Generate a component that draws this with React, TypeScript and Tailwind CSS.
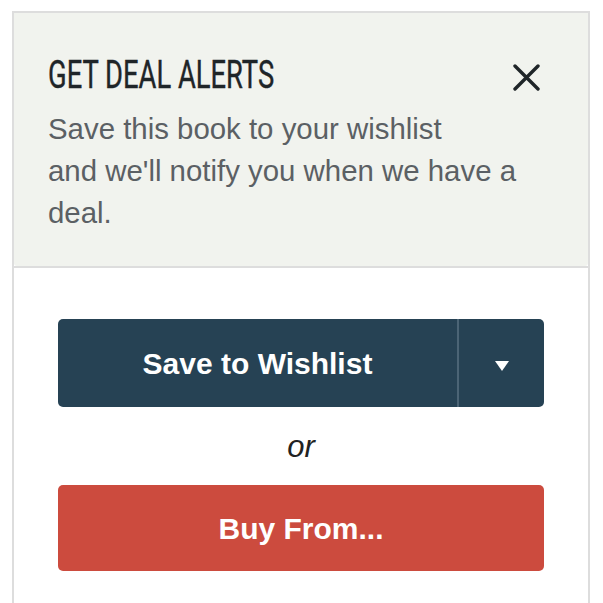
const CloseIcon = () => (
  <svg width="27" height="27" viewBox="0 0 27 27" fill="none" aria-hidden="true">
    <path d="M2 2 L25 25 M25 2 L2 25" stroke="#1f2528" strokeWidth="3.4" strokeLinecap="round" />
  </svg>
)

const Caret = () => (
  <svg width="14" height="10" viewBox="0 0 14 10" aria-hidden="true">
    <path d="M0 0 H14 L7 10 Z" fill="#ffffff" />
  </svg>
)

export default function App() {
  return (
    <div className="min-h-screen bg-white pt-[11px] pl-[12px] pr-[13px] font-['Liberation_Sans',Arial,sans-serif]">
      <div className="min-h-[600px] border-2 border-b-0 border-[#dddddd]">
        {/* deal alert header */}
        <div className="bg-[#f1f3ee] pt-[43px] pb-[32px] pl-[34px] pr-[48px] rounded-b-[3px]">
          <div className="flex items-start justify-between">
            <h2 className="h-[38px] text-[38px] leading-[38px] font-normal text-[#1f2528] font-['Roboto',sans-serif] whitespace-nowrap [-webkit-text-stroke:0.4px_#1f2528]">
              <span className="inline-block origin-left scale-x-[0.72]">GET DEAL ALERTS</span>
            </h2>
            <button type="button" className="mt-[8px]">
              <CloseIcon />
            </button>
          </div>
          <p className="mt-[14px] max-w-[496px] text-[29.4px] leading-[42px] text-[#5b6064]">
            Save this book to your wishlist
            <br />
            and we'll notify you when we have a deal.
          </p>
        </div>
        <div className="h-[2px] bg-[#dddddd]" />

        {/* actions */}
        <div className="px-[44px] pt-[51px]">
          <div className="flex h-[88px] overflow-hidden rounded-[5px] bg-[#264254]">
            <button type="button" className="flex flex-1 items-center justify-center text-[30px] font-bold text-white">
              Save to Wishlist
            </button>
            <div className="w-[2px] bg-[#4b6475]" />
            <button type="button" className="flex w-[85px] items-center justify-center pt-[6px]">
              <Caret />
            </button>
          </div>
          <p className="mt-[24px] mb-[23px] text-center text-[31px] leading-[31px] italic text-[#222222]">or</p>
          <button
            type="button"
            className="flex h-[86px] w-full items-center justify-center rounded-[5px] bg-[#cc4b3e] text-[30px] font-bold text-white"
          >
            Buy From...
          </button>
        </div>
      </div>
    </div>
  )
}
